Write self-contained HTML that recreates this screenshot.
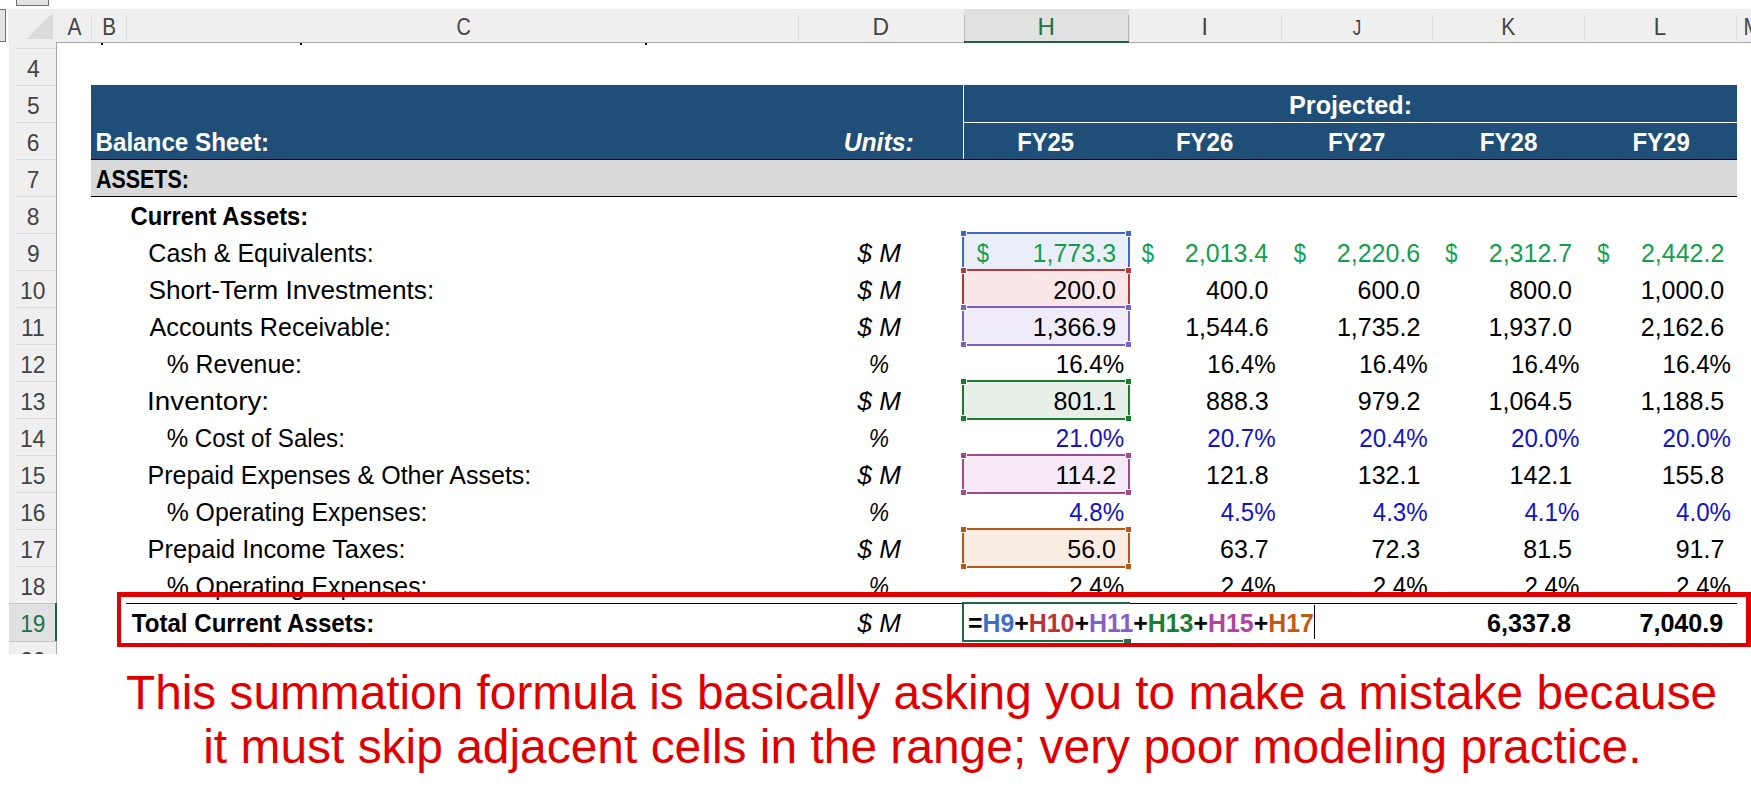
<!DOCTYPE html>
<html><head><meta charset="utf-8"><style>
html,body{margin:0;padding:0;background:#fff;width:1751px;height:800px;overflow:hidden}
svg{display:block}
text{font-family:"Liberation Sans",sans-serif;}
</style></head><body>
<svg width="1751" height="800" viewBox="0 0 1751 800" shape-rendering="crispEdges">
<rect x="16" y="-1" width="33" height="7" fill="#6e6e6e" />
<rect x="17" y="-1" width="31" height="6" fill="#e3e3e3" />
<rect x="-1" y="9" width="7" height="33" fill="#6e6e6e" />
<rect x="-1" y="10" width="6" height="31" fill="#e3e3e3" />
<rect x="8" y="9" width="1743" height="33" fill="#efefef" />
<rect x="9" y="42" width="47" height="612" fill="#efefef" />
<polygon points="53,12.5 53,38.5 27,38.5" fill="#dbdbdb"/>
<rect x="964" y="9" width="165" height="33" fill="#e1e1e1" />
<rect x="91" y="15" width="1" height="26" fill="#dcdcdc" />
<rect x="126" y="15" width="1" height="26" fill="#dcdcdc" />
<rect x="798" y="15" width="1" height="26" fill="#dcdcdc" />
<rect x="964" y="15" width="1" height="26" fill="#dcdcdc" />
<rect x="1129" y="15" width="1" height="26" fill="#dcdcdc" />
<rect x="1281" y="15" width="1" height="26" fill="#dcdcdc" />
<rect x="1432" y="15" width="1" height="26" fill="#dcdcdc" />
<rect x="1584" y="15" width="1" height="26" fill="#dcdcdc" />
<rect x="1736" y="15" width="1" height="26" fill="#dcdcdc" />
<rect x="56" y="42" width="1695" height="1" fill="#a8a8a8" />
<rect x="964" y="15" width="1" height="27" fill="#b8b8b8" />
<rect x="1128" y="15" width="1" height="27" fill="#b8b8b8" />
<rect x="964" y="41" width="165" height="2" fill="#22603f" />
<rect x="15" y="48" width="41" height="1" fill="#dadada" />
<rect x="15" y="85" width="41" height="1" fill="#dadada" />
<rect x="15" y="122" width="41" height="1" fill="#dadada" />
<rect x="15" y="159" width="41" height="1" fill="#dadada" />
<rect x="15" y="196" width="41" height="1" fill="#dadada" />
<rect x="15" y="233" width="41" height="1" fill="#dadada" />
<rect x="15" y="270" width="41" height="1" fill="#dadada" />
<rect x="15" y="307" width="41" height="1" fill="#dadada" />
<rect x="15" y="344" width="41" height="1" fill="#dadada" />
<rect x="15" y="381" width="41" height="1" fill="#dadada" />
<rect x="15" y="418" width="41" height="1" fill="#dadada" />
<rect x="15" y="455" width="41" height="1" fill="#dadada" />
<rect x="15" y="492" width="41" height="1" fill="#dadada" />
<rect x="15" y="529" width="41" height="1" fill="#dadada" />
<rect x="15" y="566" width="41" height="1" fill="#dadada" />
<rect x="15" y="603" width="41" height="1" fill="#dadada" />
<rect x="15" y="640" width="41" height="1" fill="#dadada" />
<rect x="9" y="604" width="47" height="37" fill="#e1e1e1" />
<rect x="56" y="42" width="1" height="612" fill="#a8a8a8" />
<rect x="9" y="603" width="47" height="1" fill="#c4c4c4" />
<rect x="9" y="641" width="47" height="1" fill="#c4c4c4" />
<rect x="55" y="603" width="2" height="38" fill="#22603f" />
<rect x="91" y="85" width="1646" height="74" fill="#1f4e79" />
<rect x="963" y="85" width="1" height="74" fill="#ffffff" />
<rect x="964" y="122" width="773" height="1" fill="#ffffff" />
<rect x="91" y="159" width="1646" height="1" fill="#000000" />
<rect x="91" y="160" width="1646" height="36" fill="#d9d9d9" />
<rect x="91" y="196" width="1646" height="1" fill="#000000" />
<rect x="126" y="603" width="1611" height="1" fill="#000000" />
<rect x="962" y="232" width="168" height="40" fill="#3d6ac5" />
<rect x="964" y="234" width="164" height="36" fill="#e9eef9" />
<rect x="962" y="269" width="168" height="40" fill="#b03a3a" />
<rect x="964" y="271" width="164" height="36" fill="#fae8e8" />
<rect x="962" y="306" width="168" height="40" fill="#7d5fc0" />
<rect x="964" y="308" width="164" height="36" fill="#efebf8" />
<rect x="962" y="380" width="168" height="40" fill="#1a7a2e" />
<rect x="964" y="382" width="164" height="36" fill="#e6f0e8" />
<rect x="962" y="454" width="168" height="40" fill="#a04a90" />
<rect x="964" y="456" width="164" height="36" fill="#f7e9f5" />
<rect x="962" y="528" width="168" height="40" fill="#b5581a" />
<rect x="964" y="530" width="164" height="36" fill="#f9ede3" />
<rect x="960" y="230" width="7" height="7" fill="#ffffff" />
<rect x="1125" y="230" width="7" height="7" fill="#ffffff" />
<rect x="960" y="267" width="7" height="7" fill="#ffffff" />
<rect x="1125" y="267" width="7" height="7" fill="#ffffff" />
<rect x="961" y="231" width="5" height="5" fill="#3d6ac5" />
<rect x="1126" y="231" width="5" height="5" fill="#3d6ac5" />
<rect x="961" y="268" width="5" height="5" fill="#3d6ac5" />
<rect x="1126" y="268" width="5" height="5" fill="#3d6ac5" />
<rect x="960" y="267" width="7" height="7" fill="#ffffff" />
<rect x="1125" y="267" width="7" height="7" fill="#ffffff" />
<rect x="960" y="304" width="7" height="7" fill="#ffffff" />
<rect x="1125" y="304" width="7" height="7" fill="#ffffff" />
<rect x="961" y="268" width="5" height="5" fill="#b03a3a" />
<rect x="1126" y="268" width="5" height="5" fill="#b03a3a" />
<rect x="961" y="305" width="5" height="5" fill="#b03a3a" />
<rect x="1126" y="305" width="5" height="5" fill="#b03a3a" />
<rect x="960" y="304" width="7" height="7" fill="#ffffff" />
<rect x="1125" y="304" width="7" height="7" fill="#ffffff" />
<rect x="960" y="341" width="7" height="7" fill="#ffffff" />
<rect x="1125" y="341" width="7" height="7" fill="#ffffff" />
<rect x="961" y="305" width="5" height="5" fill="#7d5fc0" />
<rect x="1126" y="305" width="5" height="5" fill="#7d5fc0" />
<rect x="961" y="342" width="5" height="5" fill="#7d5fc0" />
<rect x="1126" y="342" width="5" height="5" fill="#7d5fc0" />
<rect x="960" y="378" width="7" height="7" fill="#ffffff" />
<rect x="1125" y="378" width="7" height="7" fill="#ffffff" />
<rect x="960" y="415" width="7" height="7" fill="#ffffff" />
<rect x="1125" y="415" width="7" height="7" fill="#ffffff" />
<rect x="961" y="379" width="5" height="5" fill="#1a7a2e" />
<rect x="1126" y="379" width="5" height="5" fill="#1a7a2e" />
<rect x="961" y="416" width="5" height="5" fill="#1a7a2e" />
<rect x="1126" y="416" width="5" height="5" fill="#1a7a2e" />
<rect x="960" y="452" width="7" height="7" fill="#ffffff" />
<rect x="1125" y="452" width="7" height="7" fill="#ffffff" />
<rect x="960" y="489" width="7" height="7" fill="#ffffff" />
<rect x="1125" y="489" width="7" height="7" fill="#ffffff" />
<rect x="961" y="453" width="5" height="5" fill="#a04a90" />
<rect x="1126" y="453" width="5" height="5" fill="#a04a90" />
<rect x="961" y="490" width="5" height="5" fill="#a04a90" />
<rect x="1126" y="490" width="5" height="5" fill="#a04a90" />
<rect x="960" y="526" width="7" height="7" fill="#ffffff" />
<rect x="1125" y="526" width="7" height="7" fill="#ffffff" />
<rect x="960" y="563" width="7" height="7" fill="#ffffff" />
<rect x="1125" y="563" width="7" height="7" fill="#ffffff" />
<rect x="961" y="527" width="5" height="5" fill="#b5581a" />
<rect x="1126" y="527" width="5" height="5" fill="#b5581a" />
<rect x="961" y="564" width="5" height="5" fill="#b5581a" />
<rect x="1126" y="564" width="5" height="5" fill="#b5581a" />
<rect x="962" y="602" width="168" height="2" fill="#1f6840" />
<rect x="962" y="602" width="2" height="40" fill="#1f6840" />
<rect x="962" y="640" width="161" height="2" fill="#1f6840" />
<rect x="1124" y="639" width="7" height="5" fill="#2a6a48" />
<rect x="1314" y="605" width="1.2" height="34" fill="#000000" />
<defs><clipPath id="cl"><rect x="0" y="0" width="1751" height="654"/><rect x="60" y="654" width="1691" height="146"/></clipPath></defs>
<g shape-rendering="auto" clip-path="url(#cl)">
<text transform="matrix(0.9106 0 0 1 67.40 34.80)" style="font-size:23px;" fill="#444444">A</text>
<text transform="matrix(0.8970 0 0 1 102.32 34.80)" style="font-size:23px;" fill="#444444">B</text>
<text transform="matrix(0.8615 0 0 1 456.43 34.80)" style="font-size:23px;" fill="#444444">C</text>
<text transform="matrix(0.9964 0 0 1 872.43 34.80)" style="font-size:23px;" fill="#444444">D</text>
<text transform="matrix(1.0485 0 0 1 1037.43 34.80)" style="font-size:23px;" fill="#217346">H</text>
<text transform="matrix(0.7377 0 0 1 1352.72 34.80)" style="font-size:23px;" fill="#444444">J</text>
<text transform="matrix(0.9132 0 0 1 1501.19 34.80)" style="font-size:23px;" fill="#444444">K</text>
<text transform="matrix(0.9756 0 0 1 1653.87 34.80)" style="font-size:23px;" fill="#444444">L</text>
<text transform="matrix(1.0000 0 0 1 1201.41 34.80)" style="font-size:23px;" fill="#444444">I</text>
<text transform="matrix(0.9000 0 0 1 1743.41 34.80)" style="font-size:23px;" fill="#444444">M</text>
<text transform="matrix(0.9700 0 0 1 26.90 76.90)" style="font-size:23.5px;" fill="#444444">4</text>
<text transform="matrix(0.9700 0 0 1 26.90 113.90)" style="font-size:23.5px;" fill="#444444">5</text>
<text transform="matrix(0.9700 0 0 1 26.77 150.90)" style="font-size:23.5px;" fill="#444444">6</text>
<text transform="matrix(0.9700 0 0 1 26.83 187.90)" style="font-size:23.5px;" fill="#444444">7</text>
<text transform="matrix(0.9700 0 0 1 26.83 224.90)" style="font-size:23.5px;" fill="#444444">8</text>
<text transform="matrix(0.9700 0 0 1 26.90 261.90)" style="font-size:23.5px;" fill="#444444">9</text>
<text transform="matrix(0.9700 0 0 1 20.07 298.90)" style="font-size:23.5px;" fill="#444444">10</text>
<text transform="matrix(0.9700 0 0 1 21.04 335.90)" style="font-size:23.5px;" fill="#444444">11</text>
<text transform="matrix(0.9700 0 0 1 20.19 372.90)" style="font-size:23.5px;" fill="#444444">12</text>
<text transform="matrix(0.9700 0 0 1 20.13 409.90)" style="font-size:23.5px;" fill="#444444">13</text>
<text transform="matrix(0.9700 0 0 1 19.95 446.90)" style="font-size:23.5px;" fill="#444444">14</text>
<text transform="matrix(0.9700 0 0 1 20.13 483.90)" style="font-size:23.5px;" fill="#444444">15</text>
<text transform="matrix(0.9700 0 0 1 20.13 520.90)" style="font-size:23.5px;" fill="#444444">16</text>
<text transform="matrix(0.9700 0 0 1 20.19 557.90)" style="font-size:23.5px;" fill="#444444">17</text>
<text transform="matrix(0.9700 0 0 1 20.13 594.90)" style="font-size:23.5px;" fill="#444444">18</text>
<text transform="matrix(0.9700 0 0 1 20.19 631.90)" style="font-size:23.5px;" fill="#217346">19</text>
<text transform="matrix(0.9700 0 0 1 20.37 668.90)" style="font-size:23.5px;" fill="#444444">20</text>
<text transform="matrix(1.0067 0 0 1 1289.06 113.70)" style="font-size:25px;font-weight:bold;" fill="#ffffff">Projected:</text>
<text transform="matrix(0.9698 0 0 1 95.42 150.70)" style="font-size:25px;font-weight:bold;" fill="#ffffff">Balance Sheet:</text>
<text transform="matrix(0.9890 0 0 1 843.64 150.70)" style="font-size:25px;font-weight:bold;font-style:italic;" fill="#ffffff">Units:</text>
<text transform="matrix(0.9535 0 0 1 1017.15 150.70)" style="font-size:25px;font-weight:bold;" fill="#ffffff">FY25</text>
<text transform="matrix(0.9594 0 0 1 1175.94 150.70)" style="font-size:25px;font-weight:bold;" fill="#ffffff">FY26</text>
<text transform="matrix(0.9615 0 0 1 1327.94 150.70)" style="font-size:25px;font-weight:bold;" fill="#ffffff">FY27</text>
<text transform="matrix(0.9674 0 0 1 1479.63 150.70)" style="font-size:25px;font-weight:bold;" fill="#ffffff">FY28</text>
<text transform="matrix(0.9594 0 0 1 1632.44 150.70)" style="font-size:25px;font-weight:bold;" fill="#ffffff">FY29</text>
<text transform="matrix(0.8576 0 0 1 95.97 187.70)" style="font-size:25px;font-weight:bold;" fill="#000">ASSETS:</text>
<text transform="matrix(0.9526 0 0 1 130.55 224.70)" style="font-size:25px;font-weight:bold;" fill="#000">Current Assets:</text>
<text transform="matrix(1.0019 0 0 1 148.35 261.70)" style="font-size:25px;" fill="#000">Cash &amp; Equivalents:</text>
<text transform="matrix(1.0499 0 0 1 148.42 298.70)" style="font-size:25px;" fill="#000">Short-Term Investments:</text>
<text transform="matrix(1.0050 0 0 1 149.60 335.70)" style="font-size:25px;" fill="#000">Accounts Receivable:</text>
<text transform="matrix(0.9938 0 0 1 166.63 372.70)" style="font-size:25px;" fill="#000">% Revenue:</text>
<text transform="matrix(1.1117 0 0 1 147.10 409.70)" style="font-size:25px;" fill="#000">Inventory:</text>
<text transform="matrix(0.9652 0 0 1 166.66 446.70)" style="font-size:25px;" fill="#000">% Cost of Sales:</text>
<text transform="matrix(1.0010 0 0 1 147.60 483.70)" style="font-size:25px;" fill="#000">Prepaid Expenses &amp; Other Assets:</text>
<text transform="matrix(0.9935 0 0 1 166.63 520.70)" style="font-size:25px;" fill="#000">% Operating Expenses:</text>
<text transform="matrix(1.0168 0 0 1 147.57 557.70)" style="font-size:25px;" fill="#000">Prepaid Income Taxes:</text>
<text transform="matrix(0.9935 0 0 1 166.63 594.70)" style="font-size:25px;" fill="#000">% Operating Expenses:</text>
<text transform="matrix(0.9648 0 0 1 131.76 631.70)" style="font-size:25px;font-weight:bold;" fill="#000">Total Current Assets:</text>
<text transform="matrix(1.0363 0 0 1 857.56 261.70)" style="font-size:25px;font-style:italic;" fill="#000">$ M</text>
<text transform="matrix(1.0363 0 0 1 857.56 298.70)" style="font-size:25px;font-style:italic;" fill="#000">$ M</text>
<text transform="matrix(1.0363 0 0 1 857.56 335.70)" style="font-size:25px;font-style:italic;" fill="#000">$ M</text>
<text transform="matrix(1.0363 0 0 1 857.56 409.70)" style="font-size:25px;font-style:italic;" fill="#000">$ M</text>
<text transform="matrix(1.0363 0 0 1 857.56 483.70)" style="font-size:25px;font-style:italic;" fill="#000">$ M</text>
<text transform="matrix(1.0363 0 0 1 857.56 557.70)" style="font-size:25px;font-style:italic;" fill="#000">$ M</text>
<text transform="matrix(1.0363 0 0 1 857.56 631.70)" style="font-size:25px;font-style:italic;" fill="#000">$ M</text>
<text transform="matrix(0.9128 0 0 1 868.80 372.70)" style="font-size:25px;font-style:italic;" fill="#000">%</text>
<text transform="matrix(0.9128 0 0 1 868.80 446.70)" style="font-size:25px;font-style:italic;" fill="#000">%</text>
<text transform="matrix(0.9128 0 0 1 868.80 520.70)" style="font-size:25px;font-style:italic;" fill="#000">%</text>
<text transform="matrix(0.9128 0 0 1 868.80 594.70)" style="font-size:25px;font-style:italic;" fill="#000">%</text>
<text transform="matrix(1.0000 0 0 1 1032.62 261.70)" style="font-size:25px;" fill="#10a04e">1,773.3</text>
<text transform="matrix(1.0000 0 0 1 1184.84 261.70)" style="font-size:25px;" fill="#10a04e">2,013.4</text>
<text transform="matrix(1.0000 0 0 1 1336.82 261.70)" style="font-size:25px;" fill="#10a04e">2,220.6</text>
<text transform="matrix(1.0000 0 0 1 1488.74 261.70)" style="font-size:25px;" fill="#10a04e">2,312.7</text>
<text transform="matrix(1.0000 0 0 1 1640.94 261.70)" style="font-size:25px;" fill="#10a04e">2,442.2</text>
<text transform="matrix(0.8800 0 0 1 976.78 261.70)" style="font-size:25px;" fill="#10a04e">$</text>
<text transform="matrix(0.8800 0 0 1 1141.78 261.70)" style="font-size:25px;" fill="#10a04e">$</text>
<text transform="matrix(0.8800 0 0 1 1293.78 261.70)" style="font-size:25px;" fill="#10a04e">$</text>
<text transform="matrix(0.8800 0 0 1 1445.18 261.70)" style="font-size:25px;" fill="#10a04e">$</text>
<text transform="matrix(0.8800 0 0 1 1597.18 261.70)" style="font-size:25px;" fill="#10a04e">$</text>
<text transform="matrix(1.0000 0 0 1 1053.34 298.70)" style="font-size:25px;" fill="#000">200.0</text>
<text transform="matrix(1.0000 0 0 1 1205.94 298.70)" style="font-size:25px;" fill="#000">400.0</text>
<text transform="matrix(1.0000 0 0 1 1357.54 298.70)" style="font-size:25px;" fill="#000">600.0</text>
<text transform="matrix(1.0000 0 0 1 1509.34 298.70)" style="font-size:25px;" fill="#000">800.0</text>
<text transform="matrix(1.0000 0 0 1 1640.69 298.70)" style="font-size:25px;" fill="#000">1,000.0</text>
<text transform="matrix(1.0000 0 0 1 1032.74 335.70)" style="font-size:25px;" fill="#000">1,366.9</text>
<text transform="matrix(1.0000 0 0 1 1185.22 335.70)" style="font-size:25px;" fill="#000">1,544.6</text>
<text transform="matrix(1.0000 0 0 1 1336.94 335.70)" style="font-size:25px;" fill="#000">1,735.2</text>
<text transform="matrix(1.0000 0 0 1 1488.49 335.70)" style="font-size:25px;" fill="#000">1,937.0</text>
<text transform="matrix(1.0000 0 0 1 1640.82 335.70)" style="font-size:25px;" fill="#000">2,162.6</text>
<text transform="matrix(0.9650 0 0 1 1055.72 372.70)" style="font-size:25px;" fill="#000">16.4%</text>
<text transform="matrix(0.9650 0 0 1 1207.22 372.70)" style="font-size:25px;" fill="#000">16.4%</text>
<text transform="matrix(0.9650 0 0 1 1359.32 372.70)" style="font-size:25px;" fill="#000">16.4%</text>
<text transform="matrix(0.9650 0 0 1 1511.02 372.70)" style="font-size:25px;" fill="#000">16.4%</text>
<text transform="matrix(0.9650 0 0 1 1662.62 372.70)" style="font-size:25px;" fill="#000">16.4%</text>
<text transform="matrix(1.0000 0 0 1 1053.59 409.70)" style="font-size:25px;" fill="#000">801.1</text>
<text transform="matrix(1.0000 0 0 1 1206.07 409.70)" style="font-size:25px;" fill="#000">888.3</text>
<text transform="matrix(1.0000 0 0 1 1357.79 409.70)" style="font-size:25px;" fill="#000">979.2</text>
<text transform="matrix(1.0000 0 0 1 1488.62 409.70)" style="font-size:25px;" fill="#000">1,064.5</text>
<text transform="matrix(1.0000 0 0 1 1640.82 409.70)" style="font-size:25px;" fill="#000">1,188.5</text>
<text transform="matrix(0.9650 0 0 1 1055.72 446.70)" style="font-size:25px;" fill="#1414c4">21.0%</text>
<text transform="matrix(0.9650 0 0 1 1207.22 446.70)" style="font-size:25px;" fill="#1414c4">20.7%</text>
<text transform="matrix(0.9650 0 0 1 1359.32 446.70)" style="font-size:25px;" fill="#1414c4">20.4%</text>
<text transform="matrix(0.9650 0 0 1 1511.02 446.70)" style="font-size:25px;" fill="#1414c4">20.0%</text>
<text transform="matrix(0.9650 0 0 1 1662.62 446.70)" style="font-size:25px;" fill="#1414c4">20.0%</text>
<text transform="matrix(1.0000 0 0 1 1055.45 483.70)" style="font-size:25px;" fill="#000">114.2</text>
<text transform="matrix(1.0000 0 0 1 1206.07 483.70)" style="font-size:25px;" fill="#000">121.8</text>
<text transform="matrix(1.0000 0 0 1 1357.79 483.70)" style="font-size:25px;" fill="#000">132.1</text>
<text transform="matrix(1.0000 0 0 1 1509.59 483.70)" style="font-size:25px;" fill="#000">142.1</text>
<text transform="matrix(1.0000 0 0 1 1661.67 483.70)" style="font-size:25px;" fill="#000">155.8</text>
<text transform="matrix(0.9650 0 0 1 1069.14 520.70)" style="font-size:25px;" fill="#1414c4">4.8%</text>
<text transform="matrix(0.9650 0 0 1 1220.64 520.70)" style="font-size:25px;" fill="#1414c4">4.5%</text>
<text transform="matrix(0.9650 0 0 1 1372.74 520.70)" style="font-size:25px;" fill="#1414c4">4.3%</text>
<text transform="matrix(0.9650 0 0 1 1524.44 520.70)" style="font-size:25px;" fill="#1414c4">4.1%</text>
<text transform="matrix(0.9650 0 0 1 1676.04 520.70)" style="font-size:25px;" fill="#1414c4">4.0%</text>
<text transform="matrix(1.0000 0 0 1 1067.25 557.70)" style="font-size:25px;" fill="#000">56.0</text>
<text transform="matrix(1.0000 0 0 1 1220.10 557.70)" style="font-size:25px;" fill="#000">63.7</text>
<text transform="matrix(1.0000 0 0 1 1371.57 557.70)" style="font-size:25px;" fill="#000">72.3</text>
<text transform="matrix(1.0000 0 0 1 1523.37 557.70)" style="font-size:25px;" fill="#000">81.5</text>
<text transform="matrix(1.0000 0 0 1 1675.70 557.70)" style="font-size:25px;" fill="#000">91.7</text>
<text transform="matrix(0.9650 0 0 1 1069.14 594.70)" style="font-size:25px;" fill="#000">2.4%</text>
<text transform="matrix(0.9650 0 0 1 1220.64 594.70)" style="font-size:25px;" fill="#000">2.4%</text>
<text transform="matrix(0.9650 0 0 1 1372.74 594.70)" style="font-size:25px;" fill="#000">2.4%</text>
<text transform="matrix(0.9650 0 0 1 1524.44 594.70)" style="font-size:25px;" fill="#000">2.4%</text>
<text transform="matrix(0.9650 0 0 1 1676.04 594.70)" style="font-size:25px;" fill="#000">2.4%</text>
<text transform="matrix(1.0063 0 0 1 1487.12 631.70)" style="font-size:25px;font-weight:bold;" fill="#000">6,337.8</text>
<text transform="matrix(1.0036 0 0 1 1639.50 631.70)" style="font-size:25px;font-weight:bold;" fill="#000">7,040.9</text>
<text transform="matrix(0.9953 0 0 1 967.90 631.70)" style="font-size:25px;font-weight:bold;" fill="#000"><tspan fill="#000000">=</tspan><tspan fill="#3d6fc8">H9</tspan><tspan fill="#000000">+</tspan><tspan fill="#c03232">H10</tspan><tspan fill="#000000">+</tspan><tspan fill="#8a5cc8">H11</tspan><tspan fill="#000000">+</tspan><tspan fill="#1a7f35">H13</tspan><tspan fill="#000000">+</tspan><tspan fill="#b0449e">H15</tspan><tspan fill="#000000">+</tspan><tspan fill="#c05a14">H17</tspan></text>
<text transform="matrix(0.9960 0 0 1 125.95 709.00)" style="font-size:48px;" fill="#e10000">This summation formula is basically asking you to make a mistake because</text>
<text transform="matrix(0.9986 0 0 1 203.20 763.00)" style="font-size:48px;" fill="#e10000">it must skip adjacent cells in the range; very poor modeling practice.</text>
</g>
<rect x="101" y="43" width="2" height="2" fill="#000000" />
<rect x="300" y="43" width="2" height="2" fill="#000000" />
<rect x="645" y="43" width="2" height="2" fill="#000000" />
<rect x="118.75" y="594.5" width="1629.5" height="50.5" fill="none" stroke="#e10000" stroke-width="4.5"/>
</svg>
</body></html>
